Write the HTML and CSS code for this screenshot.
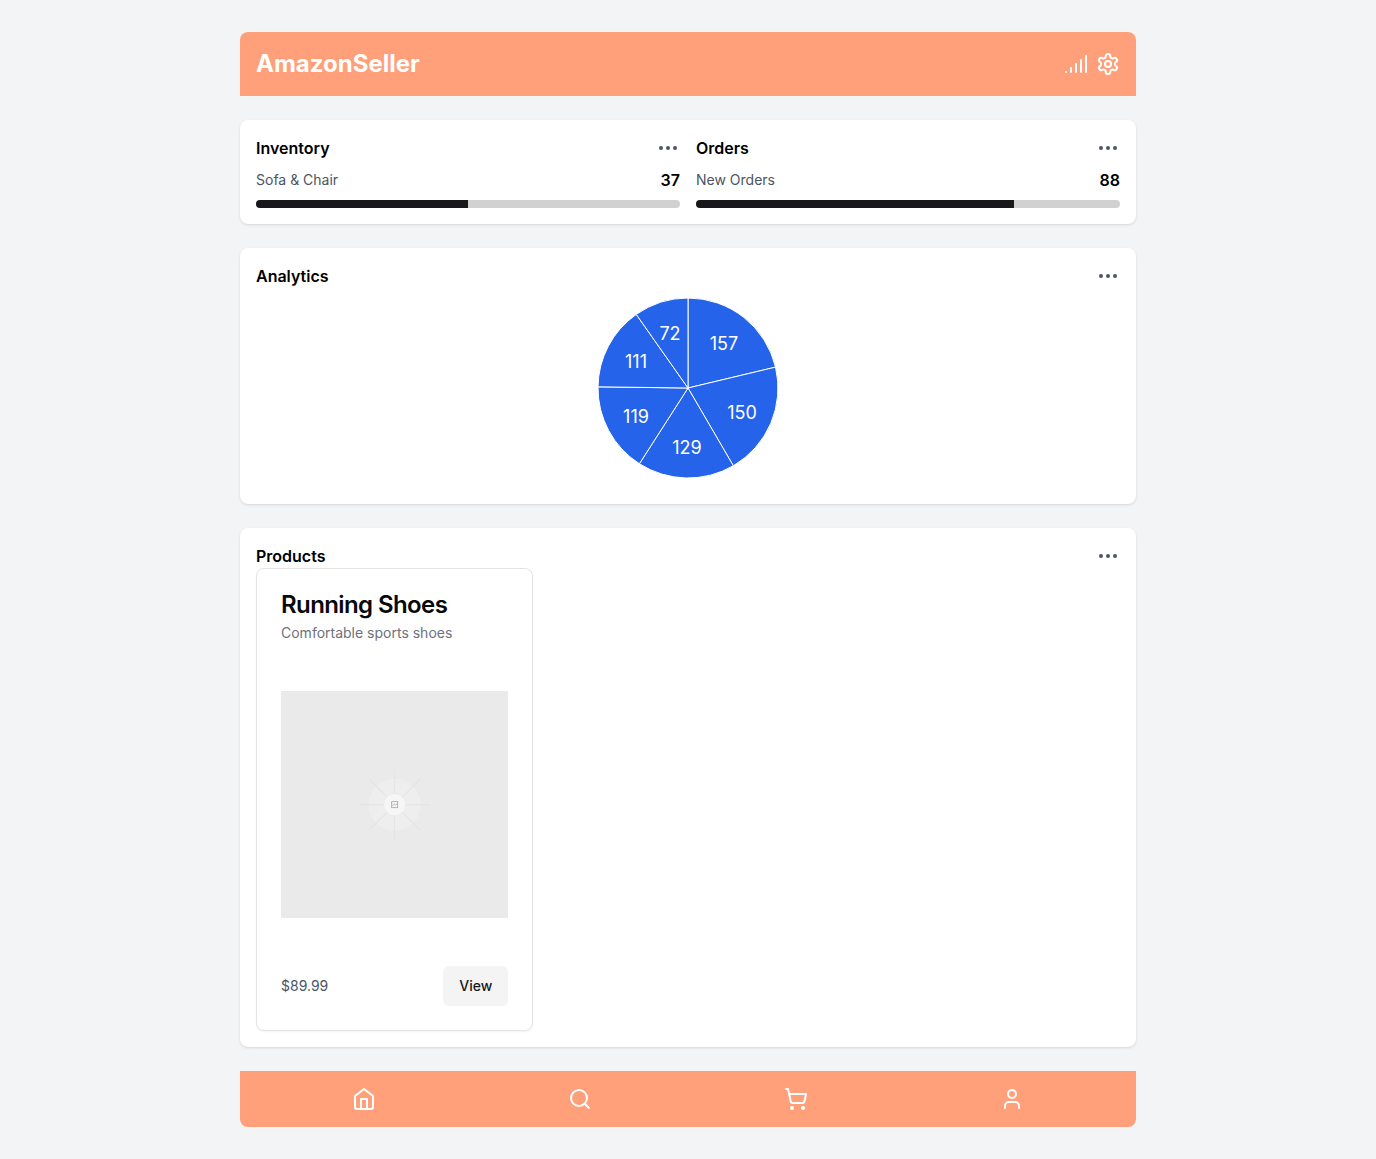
FILE: index.html
```html
<!DOCTYPE html>
<html lang="en">
<head>
<meta charset="utf-8">
<meta name="viewport" content="width=device-width, initial-scale=1">
<title>AmazonSeller</title>
<link rel="stylesheet" href="styles.css">
</head>
<body>
<div class="page">
  <header class="topbar">
    <h1 class="brand">AmazonSeller</h1>
    <div class="topbar-actions">
      <button class="icon-button" type="button" aria-label="Statistics">
        <svg class="icon" viewBox="0 0 24 24" aria-hidden="true"><path d="M2 20h.01M7 20v-4M12 20v-8M17 20V8M22 4v16"/></svg>
      </button>
      <button class="icon-button" type="button" aria-label="Settings">
        <svg class="icon" viewBox="0 0 24 24" aria-hidden="true"><path d="M12.22 2h-.44a2 2 0 0 0-2 2v.18a2 2 0 0 1-1 1.73l-.43.25a2 2 0 0 1-2 0l-.15-.08a2 2 0 0 0-2.73.73l-.22.38a2 2 0 0 0 .73 2.73l.15.1a2 2 0 0 1 1 1.72v.51a2 2 0 0 1-1 1.74l-.15.09a2 2 0 0 0-.73 2.73l.22.38a2 2 0 0 0 2.73.73l.15-.08a2 2 0 0 1 2 0l.43.25a2 2 0 0 1 1 1.73V20a2 2 0 0 0 2 2h.44a2 2 0 0 0 2-2v-.18a2 2 0 0 1 1-1.73l.43-.25a2 2 0 0 1 2 0l.15.08a2 2 0 0 0 2.73-.73l.22-.39a2 2 0 0 0-.73-2.73l-.15-.08a2 2 0 0 1-1-1.74v-.5a2 2 0 0 1 1-1.74l.15-.09a2 2 0 0 0 .73-2.73l-.22-.38a2 2 0 0 0-2.73-.73l-.15.08a2 2 0 0 1-2 0l-.43-.25a2 2 0 0 1-1-1.73V4a2 2 0 0 0-2-2z"/><circle cx="12" cy="12" r="3"/></svg>
      </button>
    </div>
  </header>

  <main class="content">
    <section class="panel stats">
      <div class="stat">
        <div class="panel-head">
          <h2 class="panel-title">Inventory</h2>
          <button class="icon-button more" type="button" aria-label="Inventory options">
            <svg class="icon" viewBox="0 0 24 24" aria-hidden="true"><circle cx="5" cy="12" r="1"/><circle cx="12" cy="12" r="1"/><circle cx="19" cy="12" r="1"/></svg>
          </button>
        </div>
        <div class="stat-row">
          <label class="muted" for="inventory-level">Sofa &amp; Chair</label>
          <span class="stat-value">37</span>
        </div>
        <progress class="meter" id="inventory-level" value="50" max="100"></progress>
      </div>
      <div class="stat">
        <div class="panel-head">
          <h2 class="panel-title">Orders</h2>
          <button class="icon-button more" type="button" aria-label="Order options">
            <svg class="icon" viewBox="0 0 24 24" aria-hidden="true"><circle cx="5" cy="12" r="1"/><circle cx="12" cy="12" r="1"/><circle cx="19" cy="12" r="1"/></svg>
          </button>
        </div>
        <div class="stat-row">
          <label class="muted" for="orders-level">New Orders</label>
          <span class="stat-value">88</span>
        </div>
        <progress class="meter" id="orders-level" value="75" max="100"></progress>
      </div>
    </section>

    <section class="panel">
      <div class="panel-head">
        <h2 class="panel-title">Analytics</h2>
        <button class="icon-button more" type="button" aria-label="Analytics options">
          <svg class="icon" viewBox="0 0 24 24" aria-hidden="true"><circle cx="5" cy="12" r="1"/><circle cx="12" cy="12" r="1"/><circle cx="19" cy="12" r="1"/></svg>
        </button>
      </div>
      <svg class="pie" viewBox="-100 -100 200 200" role="img" aria-label="Analytics pie chart">
        <g class="slices">
          <path d="M0 0V-90A90 90 0 0 1 87.54 -20.88Z"/>
          <path d="M0 0L87.54 -20.88A90 90 0 0 1 45.33 77.75Z"/>
          <path d="M0 0L45.33 77.75A90 90 0 0 1 -48.6 75.75Z"/>
          <path d="M0 0L-48.6 75.75A90 90 0 0 1 -89.99 -1.15Z"/>
          <path d="M0 0L-89.99 -1.15A90 90 0 0 1 -51.78 -73.61Z"/>
          <path d="M0 0L-51.78 -73.61A90 90 0 0 1 0 -90Z"/>
        </g>
        <g class="slice-labels">
          <text x="36" y="-45">157</text>
          <text x="54" y="24">150</text>
          <text x="-1" y="59">129</text>
          <text x="-52" y="28">119</text>
          <text x="-52" y="-27">111</text>
          <text x="-18" y="-55">72</text>
        </g>
      </svg>
    </section>

    <section class="panel">
      <div class="panel-head">
        <h2 class="panel-title">Products</h2>
        <button class="icon-button more" type="button" aria-label="Product options">
          <svg class="icon" viewBox="0 0 24 24" aria-hidden="true"><circle cx="5" cy="12" r="1"/><circle cx="12" cy="12" r="1"/><circle cx="19" cy="12" r="1"/></svg>
        </button>
      </div>
      <div class="product-grid">
        <article class="product">
          <div class="product-head">
            <h3 class="product-name">Running Shoes</h3>
            <p class="product-text">Comfortable sports shoes</p>
          </div>
          <svg class="product-image" viewBox="0 0 227 227" role="img" aria-label="Running Shoes">
            <rect width="227" height="227" fill="#eaeaea"/>
            <circle cx="113.500" cy="113.500" r="26" fill="#eeeeee"/>
            <path d="M113.500 78v71M78 113.500h71M88 88l51 51M139 88l-51 51" stroke="#e4e4e4" fill="none"/>
            <circle cx="113.500" cy="113.500" r="11" fill="#f6f6f6" stroke="#e6e6e6" stroke-width=".5"/>
            <rect x="110.500" y="110.500" width="6" height="6" fill="none" stroke="#a6a6a6" stroke-width=".8"/>
            <path d="M111 114.500l2-1.500 1.500 1 2-2" fill="none" stroke="#a6a6a6" stroke-width=".8"/>
          </svg>
          <div class="product-foot">
            <span class="muted">$89.99</span>
            <button class="view-button" type="button">View</button>
          </div>
        </article>
      </div>
    </section>
  </main>

  <nav class="tabbar" aria-label="Main">
    <a class="tab" href="#home" aria-label="Home">
      <svg class="icon" viewBox="0 0 24 24" aria-hidden="true"><path d="m3 9 9-7 9 7v11a2 2 0 0 1-2 2H5a2 2 0 0 1-2-2z"/><path d="M9 22V12h6v10"/></svg>
    </a>
    <a class="tab" href="#search" aria-label="Search">
      <svg class="icon" viewBox="0 0 24 24" aria-hidden="true"><circle cx="11" cy="11" r="8"/><path d="m21 21-4.300-4.300"/></svg>
    </a>
    <a class="tab" href="#cart" aria-label="Cart">
      <svg class="icon" viewBox="0 0 24 24" aria-hidden="true"><circle cx="8" cy="21" r="1"/><circle cx="19" cy="21" r="1"/><path d="M2.050 2.050h2l2.660 12.420a2 2 0 0 0 2 1.580h9.780a2 2 0 0 0 1.950-1.570l1.650-7.430H5.120"/></svg>
    </a>
    <a class="tab" href="#account" aria-label="Account">
      <svg class="icon" viewBox="0 0 24 24" aria-hidden="true"><path d="M19 21v-2a4 4 0 0 0-4-4H9a4 4 0 0 0-4 4v2"/><circle cx="12" cy="7" r="4"/></svg>
    </a>
  </nav>
</div>
</body>
</html>
```
FILE: styles.css
```css
*,
*::before,
*::after {
  box-sizing: border-box;
}

body {
  margin: 0;
  background: #f3f4f6;
  color: #09090b;
  font-family: Inter, "Liberation Sans", sans-serif;
  font-size: 16px;
  line-height: 24px;
}

h1, h2, h3, p {
  margin: 0;
}

.page {
  display: flex;
  flex-direction: column;
  gap: 24px;
  max-width: 896px;
  margin: 0 auto;
  padding: 32px 0;
}

.topbar {
  display: flex;
  align-items: center;
  justify-content: space-between;
  padding: 16px;
  border-radius: 8px 8px 0 0;
  background: #ffa07a;
  color: #fff;
}

.brand {
  font-size: 24px;
  font-weight: 700;
  line-height: 32px;
}

.topbar-actions {
  display: flex;
  gap: 8px;
}

.icon-button {
  display: block;
  padding: 0;
  border: 0;
  background: none;
  color: inherit;
  cursor: pointer;
}

.icon {
  display: block;
  width: 24px;
  height: 24px;
  fill: none;
  stroke: currentColor;
  stroke-width: 2;
  stroke-linecap: round;
  stroke-linejoin: round;
}

.content {
  display: flex;
  flex-direction: column;
  gap: 24px;
}

.panel {
  padding: 16px;
  border-radius: 8px;
  background: #fff;
  box-shadow: 0 1px 3px rgba(0, 0, 0, 0.1), 0 1px 2px -1px rgba(0, 0, 0, 0.1);
}

.panel-head,
.stat-row,
.product-foot {
  display: flex;
  align-items: center;
  justify-content: space-between;
}

.panel-title {
  color: #000;
  font-size: 16px;
  font-weight: 600;
}

.more {
  color: #4b5563;
}

.stats {
  display: grid;
  grid-template-columns: 1fr 1fr;
  gap: 16px;
}

.stat {
  display: flex;
  flex-direction: column;
  gap: 8px;
}

.muted {
  color: #4b5563;
  font-size: 14px;
  line-height: 20px;
}

.stat-value {
  color: #000;
  font-weight: 600;
}

.meter {
  display: block;
  width: 100%;
  height: 8px;
  overflow: hidden;
  border: 0;
  border-radius: 4px;
  background: #d1d1d1;
  appearance: none;
}

.meter::-webkit-progress-bar {
  background: #d1d1d1;
}

.meter::-webkit-progress-value {
  background: #18181b;
}

.meter::-moz-progress-bar {
  background: #18181b;
}

.pie {
  display: block;
  width: 200px;
  height: 200px;
  margin: 0 auto;
}

.slices {
  fill: #2563eb;
  stroke: #fff;
  stroke-width: 1;
}

.slice-labels {
  fill: #fff;
  font-size: 18px;
  text-anchor: middle;
  dominant-baseline: central;
}

.product-grid {
  display: grid;
  grid-template-columns: repeat(3, 1fr);
  gap: 16px;
}

.product {
  display: flex;
  flex-direction: column;
  gap: 48px;
  padding: 24px;
  border: 1px solid #e4e4e7;
  border-radius: 8px;
  background: #fff;
  box-shadow: 0 1px 2px rgba(0, 0, 0, 0.05);
}

.product-head {
  display: flex;
  flex-direction: column;
  gap: 6px;
}

.product-name {
  font-size: 24px;
  font-weight: 600;
  line-height: 24px;
  letter-spacing: -0.025em;
}

.product-text {
  color: #71717a;
  font-size: 14px;
  line-height: 20px;
}

.product-image {
  display: block;
  width: 100%;
}

.view-button {
  height: 40px;
  padding: 0 16px;
  border: 0;
  border-radius: 6px;
  background: #f4f4f5;
  color: #18181b;
  font: inherit;
  font-size: 14px;
  font-weight: 500;
  cursor: pointer;
}

.tabbar {
  display: flex;
  justify-content: space-around;
  padding: 16px;
  border-radius: 0 0 8px 8px;
  background: #ffa07a;
}

.tab {
  color: #fff;
}
```
